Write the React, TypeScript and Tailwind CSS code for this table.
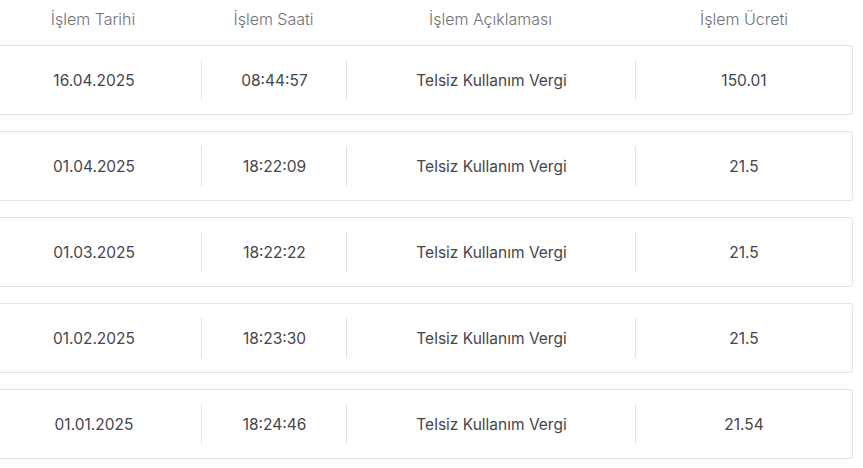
const rows = [
  { date: '16.04.2025', time: '08:44:57', desc: 'Telsiz Kullanım Vergi', fee: '150.01' },
  { date: '01.04.2025', time: '18:22:09', desc: 'Telsiz Kullanım Vergi', fee: '21.5' },
  { date: '01.03.2025', time: '18:22:22', desc: 'Telsiz Kullanım Vergi', fee: '21.5' },
  { date: '01.02.2025', time: '18:23:30', desc: 'Telsiz Kullanım Vergi', fee: '21.5' },
  { date: '01.01.2025', time: '18:24:46', desc: 'Telsiz Kullanım Vergi', fee: '21.54' },
];

// column widths, the first one starts off-screen to the left
const cols = ['w-[216px]', 'w-[145px]', 'w-[289px]', 'w-[218px]'];

function Divider() {
  return <span className="h-10 w-px shrink-0 bg-[#e1e1ea]" />;
}

export default function App() {
  return (
    <div
      className="min-h-screen overflow-hidden bg-white"
      style={{ fontFamily: '"Inter", "Noto Sans", sans-serif' }}
    >
      <div className="-ml-[15px] w-[868px]">
        <div className="flex h-[37px] items-center text-[16px] font-light text-[#707076]">
          <div className={`${cols[0]} text-center`}>İşlem Tarihi</div>
          <div className={`${cols[1]} text-center`}>İşlem Saati</div>
          <div className={`${cols[2]} text-center`}>İşlem Açıklaması</div>
          <div className={`${cols[3]} text-center`}>İşlem Ücreti</div>
        </div>
        <div className="mt-2 flex flex-col gap-4">
          {rows.map((r, i) => (
            <div
              key={i}
              className="flex h-[70px] items-center rounded-[3px] border border-[#e2e2ea] text-[15.5px] text-[#45454b]"
            >
              <div className={`${cols[0]} -mr-px pt-0.5 text-center`}>{r.date}</div>
              <Divider />
              <div className={`${cols[1]} -mr-px pt-0.5 text-center`}>{r.time}</div>
              <Divider />
              <div className={`${cols[2]} -mr-px pt-0.5 text-center`}>{r.desc}</div>
              <Divider />
              <div className="flex-1 pt-0.5 text-center">{r.fee}</div>
            </div>
          ))}
        </div>
      </div>
    </div>
  );
}
